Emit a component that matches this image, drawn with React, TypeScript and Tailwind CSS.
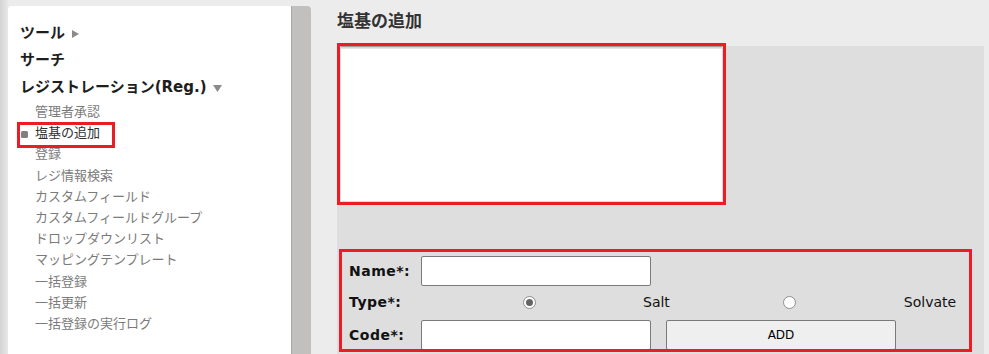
import React from "react";

const FONT = "font-['DejaVu_Sans','Noto_Sans_CJK_JP',sans-serif]";

function Radio({ checked }: { checked?: boolean }) {
  return (
    <span className="w-[13px] h-[13px] shrink-0 rounded-full border border-[#8f8f8f] bg-white flex items-center justify-center">
      {checked ? <span className="w-[7px] h-[7px] rounded-full bg-[#646464]" /> : null}
    </span>
  );
}

const subItems = [
  "管理者承認",
  "塩基の追加",
  "登録",
  "レジ情報検索",
  "カスタムフィールド",
  "カスタムフィールドグループ",
  "ドロップダウンリスト",
  "マッピングテンプレート",
  "一括登録",
  "一括更新",
  "一括登録の実行ログ",
];

export default function App() {
  return (
    <div className={`w-[989px] h-[354px] overflow-hidden bg-[#ececec] flex ${FONT}`}>
      {/* left edge shade */}
      <div className="w-[8px] shrink-0 bg-gradient-to-r from-[#d3d3d3] to-[#e8e8e8]" />

      {/* sidebar */}
      <aside className="mt-[6px] flex w-[303px] shrink-0">
        <div className="w-[283px] bg-white rounded-tl-[4px] pl-[12px] pt-[14px]">
          <ul className="text-[15px] leading-[27px] font-bold text-[#1e1e1e]">
            <li className="flex items-center">
              <span>ツール</span>
              <svg className="ml-[7px] mt-[1px]" width="7" height="8" viewBox="0 0 7 8">
                <path d="M0 0 L7 4 L0 8 Z" fill="#8a8a8a" />
              </svg>
            </li>
            <li>サーチ</li>
            <li className="flex items-center">
              <span>レジストレーション(Reg.)</span>
              <svg className="ml-[6px] mt-[1px]" width="9" height="7" viewBox="0 0 9 7">
                <path d="M0 0 L9 0 L4.5 7 Z" fill="#8a8a8a" />
              </svg>
            </li>
          </ul>
          <ul className="pl-[15px] text-[13px] leading-[21.2px] text-[#7b7b7b]">
            {subItems.map((t) =>
              t === "塩基の追加" ? (
                <li key={t} className="relative flex items-center -ml-[14px] text-[#2e2e2e]">
                  <span className="w-[7px] h-[7px] mt-[4px] mr-[7px] rounded-[1.5px] bg-[#808080]" />
                  <span>{t}</span>
                  <span className="pointer-events-none absolute left-[-4px] top-[0px] w-[98px] h-[26px] border-[3px] border-[#ed1c24]" />
                </li>
              ) : (
                <li key={t}>{t}</li>
              )
            )}
          </ul>
        </div>
        <div className="w-[20px] bg-[#c1c0be] border-l border-[#a8a8a8] rounded-tr-[4px]" />
      </aside>

      {/* main */}
      <main className="ml-[26px] flex flex-col">
        <h2 className="h-[46px] pt-[9px] text-[17px] leading-[24px] font-bold text-[#333333]">塩基の追加</h2>
        <div className="w-[647px] flex-1 bg-[#dedede] pl-[3px]">
          <textarea
            className="block w-[383px] h-[156px] resize-none bg-white border border-[#dcdcdc] border-t-[#9c9c9c] shadow-[inset_0_1px_0_#d6d6d6,inset_0_2px_0_#e4e4e4] outline-solid outline-[3px] outline-[#ed1c24]"
            defaultValue=""
          />
          <div className="mt-[50px] ml-[2px] w-[627px] h-[97px] pl-[7px] pt-[4px] outline-solid outline-[3px] outline-[#ed1c24] text-[14px] text-[#111]">
            <div className="flex items-center h-[30px]">
              <label className="w-[72px] font-bold tracking-[0.5px]">Name*:</label>
              <input className="w-[230px] h-[30px] bg-white border border-[#7a7a7a] rounded-[2px]" />
            </div>
            <div className="flex items-center h-[32px]">
              <span className="w-[72px] font-bold tracking-[0.5px]">Type*:</span>
              <span className="ml-[102px]">
                <Radio checked />
              </span>
              <span className="ml-[107px]">Salt</span>
              <span className="ml-[113px]">
                <Radio />
              </span>
              <span className="ml-[108px]">Solvate</span>
            </div>
            <div className="flex items-center h-[30px] mt-[2px]">
              <label className="w-[72px] font-bold tracking-[0.5px]">Code*:</label>
              <input className="w-[230px] h-[30px] bg-white border border-[#7a7a7a] rounded-[2px]" />
              <button className="ml-[15px] w-[230px] h-[30px] bg-[#efefef] border border-[#7a7a7a] rounded-[2px] text-[12px] text-black">
                ADD
              </button>
            </div>
          </div>
        </div>
      </main>
    </div>
  );
}
